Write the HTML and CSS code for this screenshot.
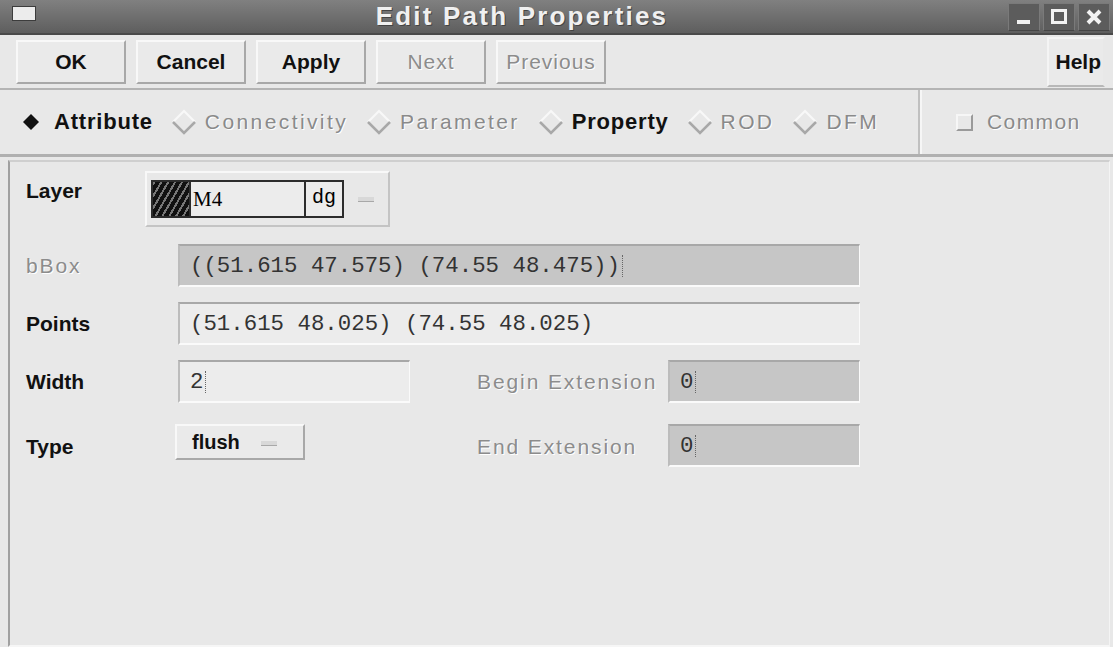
FILE: index.html
```html
<!DOCTYPE html>
<html lang="en">
<head>
    <meta charset="UTF-8">
    <meta name="viewport" content="width=device-width, initial-scale=1.0">
    <title>Edit Path Properties</title>
    <link rel="stylesheet" href="styles.css">
</head>
<body>
    <div class="window">
        <!-- Title bar -->
        <div class="titlebar">
            <div class="win-icon"></div>
            <div class="title">Edit Path Properties</div>
            <div class="win-buttons">
                <span class="win-btn"><svg width="20" height="20" viewBox="0 0 20 20"><rect x="3" y="13" width="13" height="4" fill="#f2f2f2"/></svg></span>
                <span class="win-btn"><svg width="20" height="20" viewBox="0 0 20 20"><rect x="3.5" y="3.5" width="13" height="12" fill="none" stroke="#f2f2f2" stroke-width="3"/></svg></span>
                <span class="win-btn"><svg width="20" height="20" viewBox="0 0 20 20"><path d="M4 4 L16 16 M16 4 L4 16" stroke="#f2f2f2" stroke-width="4"/></svg></span>
            </div>
        </div>

        <!-- Action buttons -->
        <div class="toolbar">
            <button class="btn">OK</button>
            <button class="btn">Cancel</button>
            <button class="btn">Apply</button>
            <button class="btn disabled">Next</button>
            <button class="btn disabled">Previous</button>
            <div class="spacer"></div>
            <button class="btn help">Help</button>
        </div>

        <!-- Mode selection -->
        <div class="modes">
            <div class="radios">
                <span class="radio on"><svg width="22" height="22" viewBox="0 0 22 22"><path d="M11 3 L19 11 L11 19 L3 11 Z" fill="#111"/></svg></span>
                <span class="mode-label">Attribute</span>
                <span class="radio"><svg width="26" height="26" viewBox="0 0 26 26"><path d="M2 13 L13 2 L24 13" fill="none" stroke="#f8f8f8" stroke-width="2"/><path d="M2 13 L13 24 L24 13" fill="none" stroke="#a8a8a8" stroke-width="2.5"/></svg></span>
                <span class="mode-label off">Connectivity</span>
                <span class="radio"><svg width="26" height="26" viewBox="0 0 26 26"><path d="M2 13 L13 2 L24 13" fill="none" stroke="#f8f8f8" stroke-width="2"/><path d="M2 13 L13 24 L24 13" fill="none" stroke="#a8a8a8" stroke-width="2.5"/></svg></span>
                <span class="mode-label off">Parameter</span>
                <span class="radio"><svg width="26" height="26" viewBox="0 0 26 26"><path d="M2 13 L13 2 L24 13" fill="none" stroke="#f8f8f8" stroke-width="2"/><path d="M2 13 L13 24 L24 13" fill="none" stroke="#a8a8a8" stroke-width="2.5"/></svg></span>
                <span class="mode-label">Property</span>
                <span class="radio"><svg width="26" height="26" viewBox="0 0 26 26"><path d="M2 13 L13 2 L24 13" fill="none" stroke="#f8f8f8" stroke-width="2"/><path d="M2 13 L13 24 L24 13" fill="none" stroke="#a8a8a8" stroke-width="2.5"/></svg></span>
                <span class="mode-label off">ROD</span>
                <span class="radio"><svg width="26" height="26" viewBox="0 0 26 26"><path d="M2 13 L13 2 L24 13" fill="none" stroke="#f8f8f8" stroke-width="2"/><path d="M2 13 L13 24 L24 13" fill="none" stroke="#a8a8a8" stroke-width="2.5"/></svg></span>
                <span class="mode-label off">DFM</span>
            </div>
            <div class="common">
                <span class="checkbox"></span>
                <span class="mode-label off">Common</span>
            </div>
        </div>

        <!-- Attribute panel -->
        <div class="panel">
            <div class="layer-row">
                <span class="label layer-label">Layer</span>
                <div class="layer-combo">
                    <div class="layer-box">
                        <span class="swatch"></span>
                        <span class="layer-name">M4</span>
                        <span class="layer-purpose">dg</span>
                    </div>
                    <span class="combo-mark"></span>
                </div>
            </div>

            <div class="form-grid">
                <span class="label off">bBox</span>
                <div class="field readonly wide">((51.615 47.575) (74.55 48.475))<span class="caret"></span></div>

                <span class="label">Points</span>
                <div class="field wide">(51.615 48.025) (74.55 48.025)</div>

                <span class="label">Width</span>
                <div class="field">2<span class="caret"></span></div>
                <span></span>
                <span class="label off">Begin Extension</span>
                <div class="field readonly">0<span class="caret"></span></div>

                <span class="label last">Type</span>
                <div class="type-cell">
                    <button class="btn flush">flush <span class="combo-mark"></span></button>
                </div>
                <span></span>
                <span class="label off last">End Extension</span>
                <div class="field readonly last">0<span class="caret"></span></div>
            </div>
        </div>
    </div>
</body>
</html>
```

FILE: styles.css
```css
body {
    margin: 0;
    padding: 0;
    background-color: #e6e6e6;
    font-family: "Liberation Sans", Arial, sans-serif;
}
.window {
    width: 1113px;
    height: 647px;
    overflow: hidden;
    background-color: #e8e8e8;
}
.titlebar {
    height: 35px;
    display: flex;
    align-items: center;
    background: linear-gradient(#808080, #5e5e5e);
    border-bottom: 2px solid #4a4a4a;
    box-sizing: border-box;
}
.win-icon {
    width: 22px;
    height: 13px;
    margin-left: 12px;
    margin-bottom: 6px;
    background-color: #ececec;
    border: 1px solid #3c3c3c;
}
.title {
    flex: 1;
    text-align: center;
    font-weight: bold;
    font-size: 26px;
    letter-spacing: 2.2px;
    color: #f0f0f0;
    text-shadow: 1px 1px 0 #444;
}
.win-buttons {
    display: flex;
    gap: 3px;
    margin-right: 3px;
}
.win-btn {
    width: 32px;
    height: 28px;
    display: flex;
    align-items: center;
    justify-content: center;
    background-color: #5c5c5c;
    border: 1px solid #7a7a7a;
    border-bottom-color: #444;
    box-sizing: border-box;
}
.toolbar {
    height: 55px;
    display: flex;
    align-items: center;
    gap: 10px;
    padding: 0 8px 0 16px;
    border-bottom: 2px solid #b4b4b4;
    box-sizing: border-box;
}
.btn {
    height: 44px;
    width: 110px;
    font-family: "Liberation Sans", Arial, sans-serif;
    font-weight: bold;
    font-size: 21px;
    color: #111;
    background-color: #eaeaea;
    border: 2px solid;
    border-color: #f8f8f8 #a8a8a8 #a8a8a8 #f8f8f8;
    padding: 0;
}
.btn.disabled {
    font-weight: normal;
    color: #8c8c8c;
    letter-spacing: 1px;
    text-shadow: 1px 1px 0 #fff;
}
.btn.disabled:last-of-type {
    width: 114px;
}
.spacer {
    flex: 1;
}
.btn.help {
    width: 58px;
    height: 50px;
    text-align: right;
    padding-right: 2px;
    border-color: #f4f4f4 #e8e8e8 #b8b8b8 #f4f4f4;
}
.modes {
    height: 67px;
    display: flex;
    border-bottom: 3px solid #b0b0b0;
    box-sizing: border-box;
}
.radios {
    width: 920px;
    display: flex;
    align-items: center;
    padding-left: 20px;
    border-right: 2px solid #c0c0c0;
    box-sizing: border-box;
}
.radio {
    display: flex;
    align-items: center;
    margin-right: 8px;
}
.radio.on {
    margin-right: 12px;
}
.mode-label {
    font-weight: bold;
    font-size: 22px;
    letter-spacing: 0.8px;
    color: #111;
    margin-right: 18px;
}
.mode-label.off {
    font-weight: normal;
    font-size: 21px;
    color: #8a8a8a;
    letter-spacing: 2.4px;
    text-shadow: 1px 1px 0 #fff;
}
.common {
    flex: 1;
    display: flex;
    align-items: center;
    padding-left: 34px;
    border-left: 2px solid #f6f6f6;
}
.common .mode-label.off {
    letter-spacing: 1.4px;
}
.checkbox {
    width: 13px;
    height: 13px;
    margin-right: 14px;
    border: 2px solid;
    border-color: #f6f6f6 #9a9a9a #9a9a9a #f6f6f6;
}
.panel {
    height: 487px;
    margin: 3px 3px 0 8px;
    padding: 9px 0 0 16px;
    border-left: 2px solid #a0a0a0;
    border-top: 2px solid #cfcfcf;
    border-right: 1px solid #f4f4f4;
    border-bottom: 2px solid #f6f6f6;
    box-sizing: border-box;
}
.label {
    font-weight: bold;
    font-size: 21px;
    color: #111;
}
.label.off {
    font-weight: normal;
    color: #8c8c8c;
    letter-spacing: 1.9px;
    text-shadow: 1px 1px 0 #fff;
}
.layer-row {
    display: flex;
    align-items: flex-start;
}
.layer-label {
    width: 119px;
    padding-top: 8px;
}
.layer-combo {
    width: 245px;
    height: 56px;
    display: flex;
    align-items: center;
    padding-left: 4px;
    border: 2px solid;
    border-color: #f8f8f8 #c4c4c4 #c4c4c4 #f8f8f8;
    box-sizing: border-box;
}
.layer-box {
    width: 193px;
    height: 38px;
    display: flex;
    border: 2px solid #2c2c2c;
    background-color: #ececec;
    box-sizing: border-box;
}
.swatch {
    width: 36px;
    background: repeating-linear-gradient(-60deg, #111 0 4px, #777 4px 6px);
    border-right: 2px solid #2c2c2c;
}
.layer-name {
    flex: 1;
    font-family: "Liberation Serif", "Times New Roman", serif;
    font-size: 21px;
    line-height: 34px;
    padding-left: 2px;
    border-right: 2px solid #2c2c2c;
}
.layer-purpose {
    width: 36px;
    text-align: center;
    font-family: "Liberation Mono", monospace;
    font-size: 20px;
    line-height: 32px;
}
.combo-mark {
    display: inline-block;
    width: 16px;
    height: 4px;
    margin-left: 14px;
    background-color: #d8d8d8;
    border-bottom: 1px solid #a8a8a8;
    vertical-align: middle;
}
.form-grid {
    display: grid;
    grid-template-columns: 152px 232px 67px 191px 192px;
    grid-template-rows: 43px 43px 43px 49px;
    row-gap: 15px;
    align-items: center;
    margin-top: 17px;
}
.field {
    height: 43px;
    display: flex;
    align-items: center;
    padding-left: 10px;
    font-family: "Liberation Mono", monospace;
    font-size: 22.4px;
    color: #333;
    background-color: #ececec;
    border-top: 2px solid #a8a8a8;
    border-left: 2px solid #bcbcbc;
    border-bottom: 2px solid #fafafa;
    border-right: 1px solid #fafafa;
    box-sizing: border-box;
}
.field.readonly {
    background-color: #c6c6c6;
}
.field.wide {
    grid-column: 2 / 6;
}
.field.last {
    align-self: end;
}
.label.last {
    padding-top: 8px;
}
.caret {
    display: inline-block;
    width: 2px;
    height: 22px;
    margin-left: 2px;
    border-left: 1px dotted #666;
}
.type-cell {
    align-self: start;
    margin-left: -3px;
    margin-top: 6px;
}
.btn.flush {
    width: 130px;
    height: 36px;
    font-size: 20px;
    text-align: left;
    padding-left: 15px;
}
.btn.flush .combo-mark {
    margin-left: 16px;
}
```
